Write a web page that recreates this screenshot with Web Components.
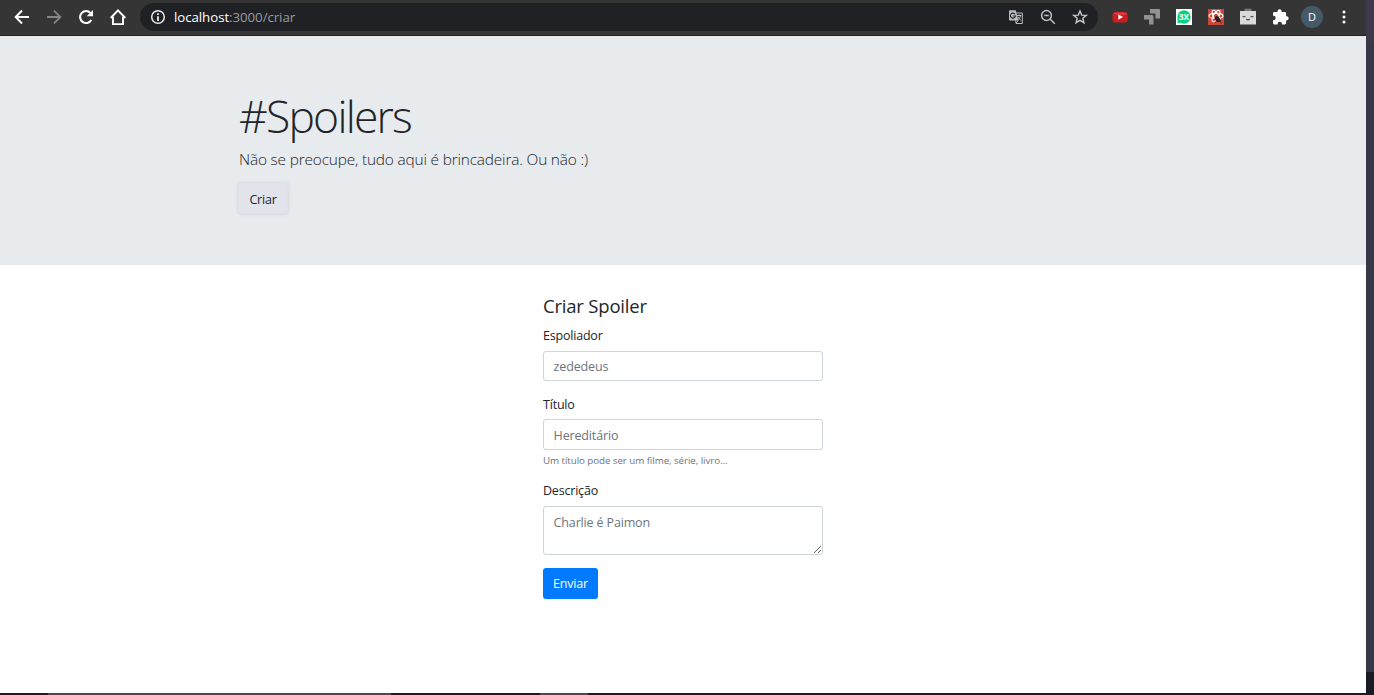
<!DOCTYPE html>
<html lang="pt-BR">
<head>
<meta charset="utf-8">
<title>#Spoilers</title>
<style>
html,body{margin:0;height:100%;overflow:hidden;background:#fff}
body{font-family:"Open Sans","Noto Sans",sans-serif;color:#212529}
</style>
</head>
<body>
<app-window>
  <browser-bar slot="bar"></browser-bar>
  <spoiler-hero>
    <span slot="title">#Spoilers</span>
    <span slot="lead">Não se preocupe, tudo aqui é brincadeira. Ou não :)</span>
    <span slot="action">Criar</span>
  </spoiler-hero>
  <spoiler-form></spoiler-form>
</app-window>
<script>
const define = (name, html) => customElements.define(name, class extends HTMLElement {
  constructor() {
    super();
    const t = document.createElement('template');
    t.innerHTML = html;
    this.attachShadow({mode: 'open'}).appendChild(t.content.cloneNode(true));
  }
});

define('app-window', `
<style>
:host{display:grid;grid-template-columns:1366px 8px;grid-template-rows:36px 657px 2px;width:1374px;height:695px}
main{background:#fff;min-width:0}
.edge{grid-column:2;grid-row:1/4;background:linear-gradient(#40394b 0 41px,#363848 41px 672px,#1b1b25 672px)}
.task{grid-column:1;grid-row:3;background:linear-gradient(90deg,#1d1b1f 0 48px,#4b4a4c 48px 391px,#1d1b1f 391px 540px,#4b4a4c 540px 588px,#1d1b1f 588px)}
</style>
<slot name="bar"></slot><main><slot></slot></main><div class="edge"></div><div class="task"></div>`);

define('browser-bar', `
<style>
:host{display:flex;align-items:center;box-sizing:border-box;height:36px;padding:0 12px 2px 12px;background:#353535;border-bottom:1px solid #222;color:#fff}
svg{display:block;flex:none}
.nav{display:flex;gap:12px;width:128px;flex:none}
.address{display:flex;flex:none;align-items:center;box-sizing:border-box;width:958px;height:28px;border-radius:14px;background:#202124;padding:0 8px}
.url{margin-left:6px;flex:1;font-size:13.3px;line-height:20px;color:#999c9f;letter-spacing:-.07px}
.url b{font-weight:400;color:#fff}
.tools{display:flex;gap:12px}
.ext{display:flex;flex:none;gap:12px;margin-left:12px}
.avatar{width:22px;height:22px;border-radius:50%;background:#455a69;font-size:11px;line-height:22px;text-align:center;margin:-1px}
</style>
<div class="nav">
<svg width="20" height="20" viewBox="0 0 20 20" fill="none" stroke="#fff" stroke-width="2"><path d="M17 10H4M10 3.5 3.7 10l6.3 6.5"/></svg>
<svg width="20" height="20" viewBox="0 0 20 20" fill="none" stroke="#858585" stroke-width="1.8"><path d="M3 10h13M10 3.7l6.3 6.3-6.3 6.3"/></svg>
<svg width="20" height="20" viewBox="0 0 20 20"><path d="M15.3 13A6 6 0 1 1 14.5 6" fill="none" stroke="#fff" stroke-width="2.1"/><path d="M17 3v6.3h-6.3z" fill="#fff"/></svg>
<svg width="20" height="20" viewBox="0 0 20 20" fill="none" stroke="#fff" stroke-width="1.9"><path d="M2.7 11 10 3.4l7.3 7.6M5 9.7v7.4h10V9.7"/></svg>
</div>
<div class="address">
<svg width="20" height="20" viewBox="0 0 20 20"><circle cx="10" cy="10" r="6.3" fill="none" stroke="#e8eaed" stroke-width="1.5"/><path d="M9.1 6.2h1.8v1.9H9.1zM9.1 9.2h1.8v4.8H9.1z" fill="#e8eaed"/></svg>
<span class="url"><b>localhost</b>:3000/criar</span>
<div class="tools">
<svg width="20" height="20" viewBox="0 0 20 20"><path d="M9 6h7.3v10.5H10z" fill="none" stroke="#b9bcc0"/><path d="M3.5 3.3h6.2l2.8 10.2H4.3a1.3 1.3 0 0 1-1.3-1.3V4z" fill="#b9bcc0"/><path d="M9 7.2A2.5 2.5 0 1 0 9.4 9H7.2" fill="none" stroke="#202124" stroke-width="1.1"/><path d="M11 8.5h4.5M13 7.3v1.2M14.5 8.5c-.3 2-1.3 3.5-2.8 4.4M11.8 9.8l3.2 3.7M10 16l2.3-2.6" fill="none" stroke="#b9bcc0"/></svg>
<svg width="20" height="20" viewBox="0 0 20 20" fill="none" stroke="#bdc1c6" stroke-width="1.5"><circle cx="8.500" cy="8.500" r="4.900"/><path d="M12 12l4.800 4.800M6.200 8.500h4.600"/></svg>
<svg width="20" height="20" viewBox="0 0 20 20" fill="none" stroke="#c6c9cd" stroke-width="1.400"><path d="M10 4l1.700 4.100 4.600.3-3.500 2.900 1.100 4.400L10 13.300l-3.900 2.400 1.100-4.400-3.500-2.900 4.600-.3z"/></svg>
</div></div>
<div class="ext">
<svg width="20" height="20" viewBox="0 0 20 20"><rect x="2.500" y="5" width="15.200" height="10.500" rx="3.600" fill="#c91d22"/><path d="M3.500 7q0-1.500 2.500-1.500h8.500q2.500 0 2.500 1.500-6.500 2.500-13.500 0" fill="#e03a3c"/><path d="M8.300 7.500v5.200l4.700-2.600z" fill="#fff"/></svg>
<svg width="20" height="20" viewBox="0 0 20 20" fill="#929292"><path d="M8 2h9q1 0 1 1v8.500h-4.500V6.500H8z"/><path d="M2 8h8q1.500 0 1.500 1.500V17.500H7V12.500H2z"/></svg>
<svg width="20" height="20" viewBox="0 0 20 20"><path d="M2 2h16v16H2z" fill="#fff"/><circle cx="10" cy="10" r="6.700" fill="#0bd17e"/><path d="M3.500 12v4.500L8 15z" fill="#0bd17e"/><text x="10" y="13" text-anchor="middle" font-size="8.300" font-weight="700" fill="#fff">3X</text></svg>
<svg width="20" height="20" viewBox="0 0 20 20"><path d="M2 2h16v16H2z" fill="#cf4439"/><g fill="none" stroke="#fff" stroke-width="1.100"><ellipse cx="10" cy="9" rx="7" ry="2.600"/><ellipse cx="10" cy="9" rx="2.600" ry="6.300" transform="rotate(-30 10 9)"/><ellipse cx="10" cy="9" rx="2.600" ry="6.300" transform="rotate(30 10 9)"/></g><ellipse cx="11.500" cy="12.200" rx="2.300" ry="3.400" transform="rotate(-35 11.500 12.200)" fill="#321b1b"/><path d="M8 12l7 1.500M9.500 15.500l3.500-6M12 9.500l3.500 7" stroke="#321b1b" stroke-width=".8"/></svg>
<svg width="20" height="20" viewBox="0 0 20 20"><path d="M6.500 1.700h7v3h-7z" fill="#777"/><path d="M2 4h16v13.500H2z" fill="#d9dadc"/><path d="M4.500 9q1.500 1.700 3 0M12.500 9q1.500 1.700 3 0M8.300 12q1.700 1.600 3.400 0" fill="none" stroke="#444" stroke-width="1.100"/></svg>
<svg width="20" height="20" viewBox="0 0 20 20"><path d="M3 6.400Q3 5 4.400 5H7.500V4.300a2.100 2.100 0 0 1 4.200 0V5h3.100q1.300 0 1.300 1.400v2.800h.5a2.100 2.100 0 0 1 0 4.200h-.5v2.700q0 1.400-1.300 1.400H12v-.5a2.200 2.200 0 0 0-4.400 0v.5H4.400Q3 17.500 3 16.100v-2.900h.5a2.200 2.200 0 0 0 0-4.400H3z" fill="#fff"/></svg>
<div class="avatar">D</div>
<svg width="20" height="20" viewBox="0 0 20 20" fill="#fff"><circle cx="10" cy="5" r="1.500"/><circle cx="10" cy="10" r="1.500"/><circle cx="10" cy="15" r="1.500"/></svg>
</div>`);

define('spoiler-hero', `
<style>
:host{display:block;box-sizing:border-box;height:229px;background:#e8ebee;padding:50px 0 0 238px}
h1{margin:0;height:61px;padding-left:1px;font-size:44.500px;line-height:60px;font-weight:300;letter-spacing:-1.800px}
p{margin:0 0 11px;padding-left:1px;height:25px;font-size:15.400px;line-height:25px;font-weight:300;letter-spacing:-.17px}
button{display:block;box-sizing:border-box;width:50px;height:31px;padding:1px 0 0;border:1px solid #dfe3e9;border-radius:3px;background:#e1e5eb;box-shadow:0 0 3px 1px #d6dae0;font:400 12.500px "Open Sans",sans-serif;color:#212529;letter-spacing:-.2px}
</style>
<h1><slot name="title"></slot></h1><p><slot name="lead"></slot></p><button><slot name="action"></slot></button>`);

define('form-field', `
<style>
:host{display:block}
.label{display:block;font-size:12.500px;line-height:20px;height:20px;margin-bottom:var(--label-gap,5px);letter-spacing:-.2px}
</style>
<label><span class="label"><slot name="label"></slot></span><slot></slot></label><slot name="help"></slot>`);

define('spoiler-form', `
<style>
:host{display:flex;flex-direction:column;width:280px;margin:29px 0 0 543px}
h4{margin:0 0 7px;height:25px;font-size:18.500px;line-height:24px;font-weight:400;letter-spacing:-.2px}
input,textarea{display:block;box-sizing:border-box;width:280px;height:30px;margin:0;padding:0 9.600px;border:1px solid #ced4da;border-radius:3px;background:#fff;font:400 12.500px/19px "Open Sans",sans-serif;letter-spacing:-.15px;color:#495057;outline:0}
textarea{height:49px;padding:6px 9.600px;resize:vertical;overflow:hidden}
::placeholder{color:#6c757d;opacity:1}
form-field + form-field{margin-top:13px}
form-field.title{--label-gap:4px;margin-top:14px}
.title input{height:31px;padding-top:1px}
small{display:block;font-size:9.800px;line-height:15px;height:15px;margin-top:3px;color:#6c757d;letter-spacing:-.08px}
button{width:55px;height:31px;margin-top:13px;padding:0;border:0;border-radius:3px;background:#007bff;color:#fff;font:400 12.500px "Open Sans",sans-serif;letter-spacing:-.2px}
</style>
<h4>Criar Spoiler</h4>
<form-field><span slot="label">Espoliador</span><input placeholder="zededeus"></form-field>
<form-field class="title"><span slot="label">Título</span><input placeholder="Hereditário"><small slot="help">Um título pode ser um filme, série, livro...</small></form-field>
<form-field><span slot="label">Descrição</span><textarea placeholder="Charlie é Paimon"></textarea></form-field>
<button>Enviar</button>`);
</script>
</body>
</html>
